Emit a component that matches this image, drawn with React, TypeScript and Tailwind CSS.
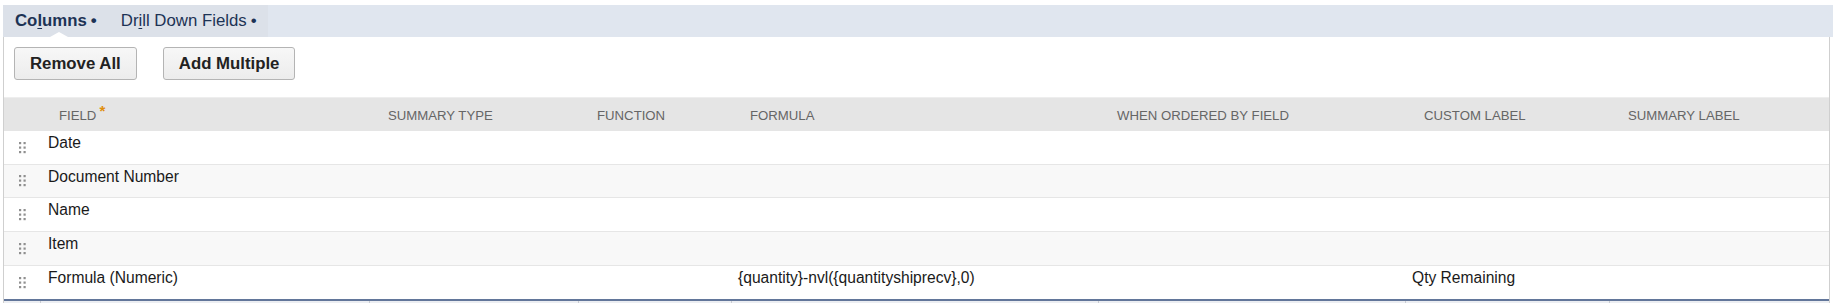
import React from 'react'

const font = { fontFamily: '"Liberation Sans", Arial, sans-serif' }

const colW = ['w-[36px]', 'w-[329px]', 'w-[209px]', 'w-[153px]', 'w-[367px]', 'w-[307px]', 'w-[204px]', 'w-[220px]']

const headers = ['', 'FIELD', 'SUMMARY TYPE', 'FUNCTION', 'FORMULA', 'WHEN ORDERED BY FIELD', 'CUSTOM LABEL', 'SUMMARY LABEL']

const rows: { cells: string[]; h: string; bg: string }[] = [
  { cells: ['Date'], h: 'h-[34px]', bg: 'bg-white' },
  { cells: ['Document Number'], h: 'h-[33px]', bg: 'bg-[#f8f8f8]' },
  { cells: ['Name'], h: 'h-[34px]', bg: 'bg-white' },
  { cells: ['Item'], h: 'h-[34px]', bg: 'bg-[#f8f8f8]' },
  {
    cells: ['Formula (Numeric)', '', '', '{quantity}-nvl({quantityshiprecv},0)', '', 'Qty Remaining', ''],
    h: 'h-[33px]',
    bg: 'bg-white',
  },
]

function DragHandle() {
  return (
    <svg width="7" height="12" viewBox="0 0 7 12" className="block">
      {[0, 4.5, 9].map((y) => (
        <g key={y} fill="#8f8f8f">
          <rect x="0" y={y} width="2.2" height="2.2" />
          <rect x="4.5" y={y} width="2.2" height="2.2" />
        </g>
      ))}
    </svg>
  )
}

export default function App() {
  return (
    <div className="w-[1833px] h-[303px] bg-white overflow-hidden" style={font}>
      {/* Subtab strip */}
      <div className="mt-[5px] ml-[3px] h-[32px] flex bg-[#e0e6ef] text-[16.8px] text-[#1d3355]">
        <div className="flex bg-[#dce1e9]">
          <div className="relative flex items-center pl-[12px] pr-[12px] font-bold">
            <span>
              Co<span className="underline underline-offset-2">l</span>umns
            </span>
            <span className="ml-[4px] text-[17px]">•</span>
            <span className="absolute left-[47px] bottom-0 w-0 h-0 border-l-[9px] border-r-[9px] border-b-[5px] border-l-transparent border-r-transparent border-b-white" />
          </div>
          <div className="flex items-center pl-[12px] pr-[11px]">
            <span>
              Dr<span className="underline underline-offset-2">i</span>ll Down Fields
            </span>
            <span className="ml-[4px] text-[17px]">•</span>
          </div>
        </div>
      </div>

      {/* Panel */}
      <div className="ml-[3px] w-[1827px] border-l border-r border-[#cfcfcf]">
        <div className="flex gap-[26px] pl-[10px] pt-[10px] pb-[17px]">
          <button className="h-[33px] px-[15px] rounded-[3px] border border-[#b4b4b4] bg-gradient-to-b from-[#f7f7f7] to-[#ececec] text-[16.8px] font-bold text-[#222]">
            Remove All
          </button>
          <button className="h-[33px] px-[15px] rounded-[3px] border border-[#b4b4b4] bg-gradient-to-b from-[#f7f7f7] to-[#ececec] text-[16.8px] font-bold text-[#222]">
            Add Multiple
          </button>
        </div>

        {/* Header */}
        <div className="flex h-[34px] bg-[#e5e5e5] border-t border-[#eeeeee] text-[13.2px] text-[#666666]">
          {headers.map((h, i) => (
            <div key={i} className={`${colW[i]} shrink-0 flex items-center pl-[19px] pt-[2px]`}>
              {h}
              {i === 1 && <span className="ml-[3px] -mt-[8px] text-[15px] font-bold text-[#e08e0b]">*</span>}
            </div>
          ))}
        </div>

        {/* Rows */}
        {rows.map((r, ri) => (
          <div key={ri} className={`flex ${r.h} ${r.bg} ${ri < rows.length - 1 ? 'border-b border-[#e6e6e6]' : ''} text-[15.6px] leading-[18px] text-[#1a1a1a]`}>
            <div className={`${colW[0]} shrink-0 flex items-center justify-center`}>
              <DragHandle />
            </div>
            {colW.slice(1).map((w, ci) => (
              <div key={ci} className={`${w} shrink-0 pt-[3px] ${ci === 0 ? 'pl-[8px]' : 'pl-[7px]'}`}>
                {r.cells[ci] ?? ''}
              </div>
            ))}
          </div>
        ))}

        {/* Bottom rule */}
        <div className="h-[2px] bg-[#62769a]" />
        <div className="flex h-[2px] bg-[#eceef2]">
          {colW.map((w, i) => (
            <div key={i} className={`${w} shrink-0 ${i > 0 ? 'border-l border-[#c9ccd2]' : ''}`} />
          ))}
        </div>
      </div>
    </div>
  )
}
